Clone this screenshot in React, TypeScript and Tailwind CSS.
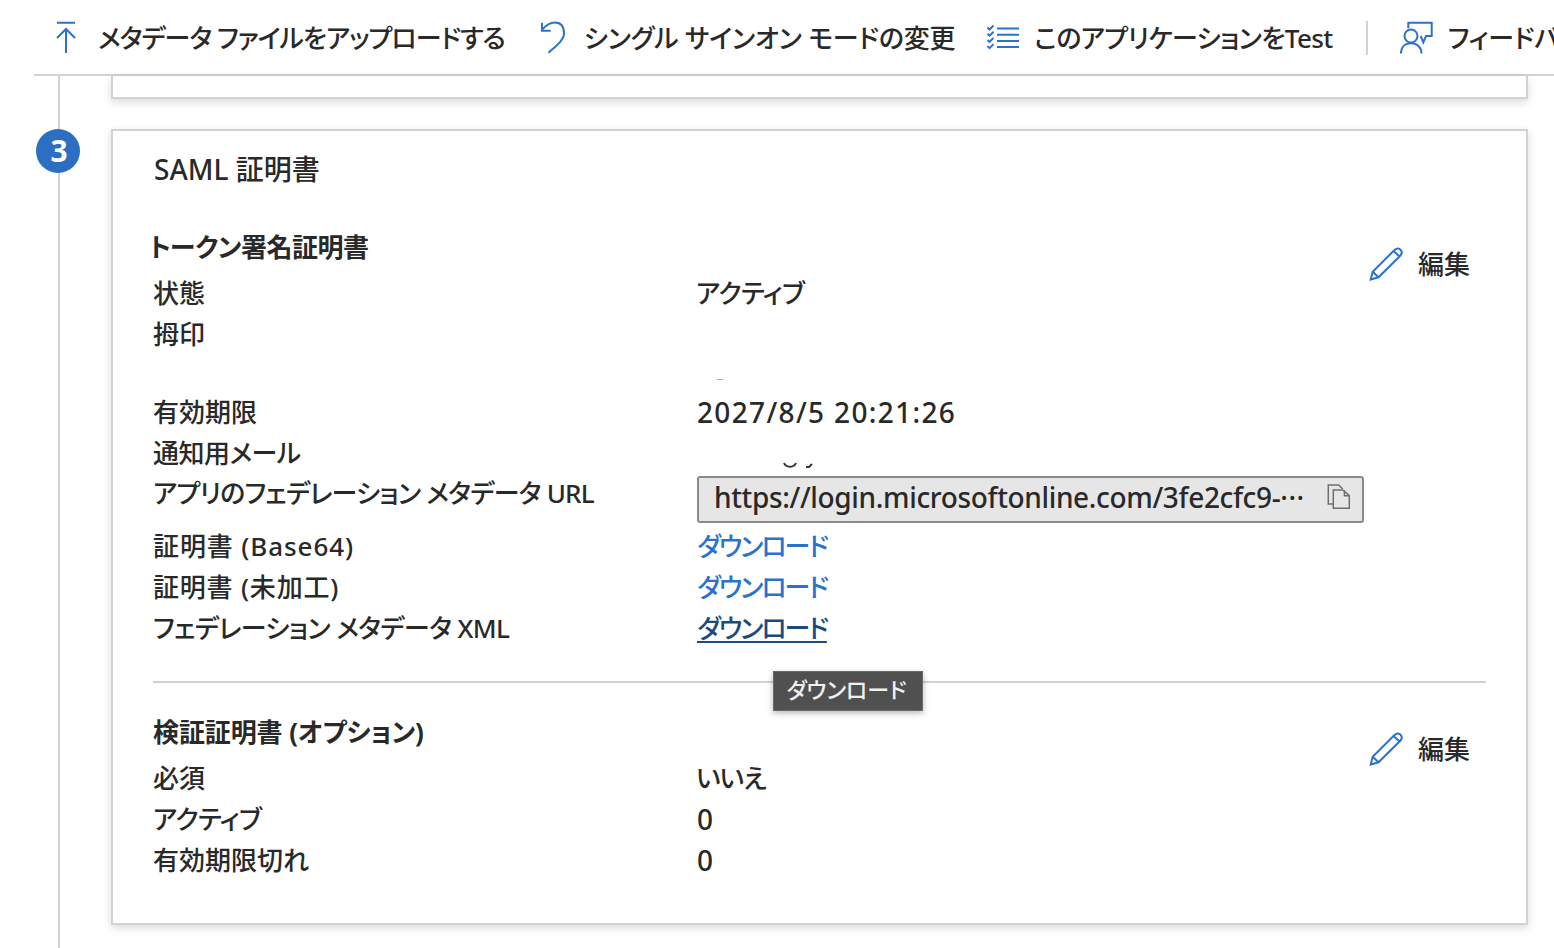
const fontCls = "[font-family:'Noto_Sans','Noto_Sans_CJK_JP',sans-serif] [font-feature-settings:'palt']";

function ToolItem({ icon, label, cls, track }: { icon: React.ReactNode; label: string; cls: string; track: string }) {
  return (
    <div className={`flex items-center shrink-0 ${cls}`}>
      {icon}
      <span className={`text-[26px] whitespace-nowrap leading-[36px] ${track}`}>{label}</span>
    </div>
  );
}

const blue = "#2b72cc";

const UploadIcon = () => (
  <svg width="20" height="34" viewBox="0 0 20 34" fill="none" stroke={blue} strokeWidth="2" className="shrink-0">
    <path d="M1 1.7h18M10 32V8M1 17l9-9 9 9" />
  </svg>
);
const UndoIcon = () => (
  <svg width="28" height="34" viewBox="0 0 28 34" fill="none" stroke={blue} strokeWidth="2" className="shrink-0">
    <path d="M3 1.7V9.7H11.7" />
    <path d="M3 9C7 4 12 1.5 16 1.5C23 1.5 25 7 25 12.5C25 19 17 25 9.5 31.7" />
  </svg>
);
const ListIcon = () => (
  <svg width="34" height="34" viewBox="0 0 34 34" fill="none" stroke={blue} strokeWidth="2" className="shrink-0">
    <path d="M11 7.5h22M11 13.7h22M11 19.9h22M11 26h22" />
    <path d="M1.5 6.5l2 2 4-4M1.5 12.7l2 2 4-4M1.5 18.9l2 2 4-4M1.5 25.1l2 2 4-4" />
  </svg>
);
const FeedbackIcon = () => (
  <svg width="34" height="34" viewBox="0 0 34 34" fill="none" stroke={blue} strokeWidth="2" className="shrink-0">
    <path d="M8.3 7.3V1.7H31.7V15H26L23.3 21.3L20.7 15" />
    <circle cx="11" cy="15" r="6.5" />
    <path d="M0.9 32.5C0.9 26 5 22.3 11 22.3S21.5 26 21.5 32.5" />
  </svg>
);
const PencilIcon = () => (
  <svg width="34" height="34" viewBox="0 0 34 34" fill="none" stroke={blue} strokeWidth="2" className="shrink-0">
    <path d="M1.7 32.5L3.7 24.7L25 3.5C27.5 1 30 1 31.5 2.7C33.2 4.5 33 7 31 9L9.5 30.3ZM3.7 24.7L9.5 30.3M24.5 4L30.5 9.5" />
  </svg>
);
const CopyIcon = () => (
  <svg width="24" height="26" viewBox="0 0 24 26" fill="none" stroke="#6f6f6f" strokeWidth="1.5" className="shrink-0 -mt-[4px]">
    <path d="M6.3 20H1.3V1H11.7L15.7 5" />
    <path d="M6.3 6H15.7L22.3 11.7V24.3H6.3ZM17.4 6V11.7H22.3" />
  </svg>
);

function Row({ label, h = 41, track = "", children }: { label: string; h?: number; track?: string; children?: React.ReactNode }) {
  return (
    <div className="flex items-center" style={{ height: h }}>
      <div className={`w-[544px] shrink-0 whitespace-nowrap ${track}`}>{label}</div>
      <div className="flex-1 min-w-0 whitespace-nowrap">{children}</div>
    </div>
  );
}

function Edit() {
  return (
    <div className="flex items-center gap-[15px] text-[26px] shrink-0">
      <PencilIcon />
      <span>編集</span>
    </div>
  );
}

const Link = () => <span className="text-[#2b72cc] tracking-[-2px]">ダウンロード</span>;

export default function App() {
  return (
    <div className={`${fontCls} relative w-[1554px] h-[948px] overflow-hidden bg-white text-[#292929] text-[26px] leading-[36px] font-medium`}>
      <div className="ml-[34px] h-[76px] pt-[2px] border-b-2 border-[#d2d2d2] flex items-center overflow-hidden">
        <ToolItem cls="ml-[22px] gap-[22px]" track="tracking-[-1px]" icon={<UploadIcon />} label="メタデータ ファイルをアップロードする" />
        <ToolItem cls="ml-[34px] gap-[17px]" track="tracking-[-0.15px]" icon={<UndoIcon />} label="シングル サインオン モードの変更" />
        <ToolItem cls="ml-[31px] gap-[14px]" track="tracking-[-0.6px]" icon={<ListIcon />} label="このアプリケーションをTest" />
        <div className="ml-[33px] w-[2px] h-[34px] bg-[#d2d2d2] shrink-0" />
        <ToolItem cls="ml-[32px] gap-[14px]" track="tracking-[-0.2px]" icon={<FeedbackIcon />} label="フィードバックがありますか?" />
      </div>

      <div className="flex h-[872px]">
        <div className="ml-[58px] w-[2px] bg-[#d2d2d2] shrink-0" />
        <div className="ml-[51px] w-[1417px] shrink-0">
          <div className="h-[23px] bg-white border-2 border-t-0 border-[#d2d2d2] shadow-[0_3px_8px_rgba(60,70,100,0.2)]" />
          <div className="relative mt-[30px] h-[796px] bg-white border-2 border-[#d2d2d2] shadow-[0_3px_8px_rgba(60,70,100,0.2)] pl-[40px] pr-[40px]">
            <div className="text-[28px] leading-[40px] mt-[18px] ml-[1px]">SAML 証明書</div>

            <div className="flex mt-[37px]">
              <div className="flex-1 min-w-0">
                <div className="font-bold h-[41px] flex items-center -ml-[4px] tracking-[-0.5px]">トークン署名証明書</div>
                <div className="h-[5px]" />
                <Row label="状態"><span className="tracking-[-0.6px] -ml-[1px]">アクティブ</span></Row>
                <Row label="拇印" />
                <Row label="" h={37}>
                  <svg width="60" height="37" viewBox="0 0 60 37" className="block"><path d="M20 25.5h6" stroke="#aaa" strokeWidth="1" /></svg>
                </Row>
                <Row label="有効期限"><span className="text-[28px] tracking-[1.35px] inline-block pt-[2px]">2027/8/5 20:21:26</span></Row>
                <Row label="通知用メール" track="tracking-[-0.5px]">
                  <svg width="130" height="41" viewBox="0 0 130 41" className="block"><path d="M87 31c2 5 10 5 12 0M109 35l3 0 3-3" stroke="#333" strokeWidth="2" fill="none" /></svg>
                </Row>
                <div className="flex items-center h-[52px]">
                  <div className="w-[544px] shrink-0 whitespace-nowrap -mt-[12px] tracking-[-0.75px]">アプリのフェデレーション メタデータ URL</div>
                  <div className="w-[667px] h-[47px] shrink-0 rounded-[3px] border-2 border-[#8a8a8a] bg-[#e6e6e6] flex items-center justify-between pl-[15px] pr-[11px]">
                    <span className="text-[28px] tracking-[-0.35px] whitespace-nowrap -mt-[4px]">https://login.microsoftonline.com/3fe2cfc9-<span className="tracking-[0.5px]">···</span></span>
                    <CopyIcon />
                  </div>
                </div>
                <Row label="証明書 (Base64)" track="tracking-[0.9px]"><Link /></Row>
                <Row label="証明書 (未加工)" track="tracking-[0.8px]"><Link /></Row>
                <Row label="フェデレーション メタデータ XML" track="tracking-[-0.6px]"><span className="text-[#1a4a80] underline underline-offset-[3px] tracking-[-2px]">ダウンロード</span></Row>
              </div>
              <div className="ml-[-170px] pt-[20px] pr-[16px] relative"><Edit /></div>
            </div>

            <div className="h-[2px] bg-[#d2d2d2] mt-[33px]" />

            <div className="flex mt-[28px]">
              <div className="flex-1 min-w-0">
                <div className="font-bold h-[41px] flex items-center tracking-[-0.1px]">検証証明書 (オプション)</div>
                <div className="h-[5px]" />
                <Row label="必須"><span className="tracking-[-1px] -ml-[1px]">いいえ</span></Row>
                <Row label="アクティブ" track="tracking-[-0.6px]"><span className="text-[28px] inline-block pt-[2px]">0</span></Row>
                <Row label="有効期限切れ"><span className="text-[28px] inline-block pt-[2px]">0</span></Row>
              </div>
              <div className="ml-[-170px] pt-[20px] pr-[16px] relative"><Edit /></div>
            </div>

            <div className="absolute left-[660px] top-[540px] w-[150px] h-[40px] bg-[#505050] border border-[#6a6a6a] shadow-[0_2px_6px_rgba(0,0,0,0.3)] text-[#f0f0f0] text-[22px] pb-[4px] pr-[3px] flex items-center justify-center whitespace-nowrap">ダウンロード</div>
          </div>
        </div>
      </div>

      <div className="absolute left-[36px] top-[129px] w-[44px] h-[44px] rounded-full bg-[#2b6ec2] text-white font-bold text-[30px] pl-[2px] flex items-center justify-center">3</div>
    </div>
  );
}
